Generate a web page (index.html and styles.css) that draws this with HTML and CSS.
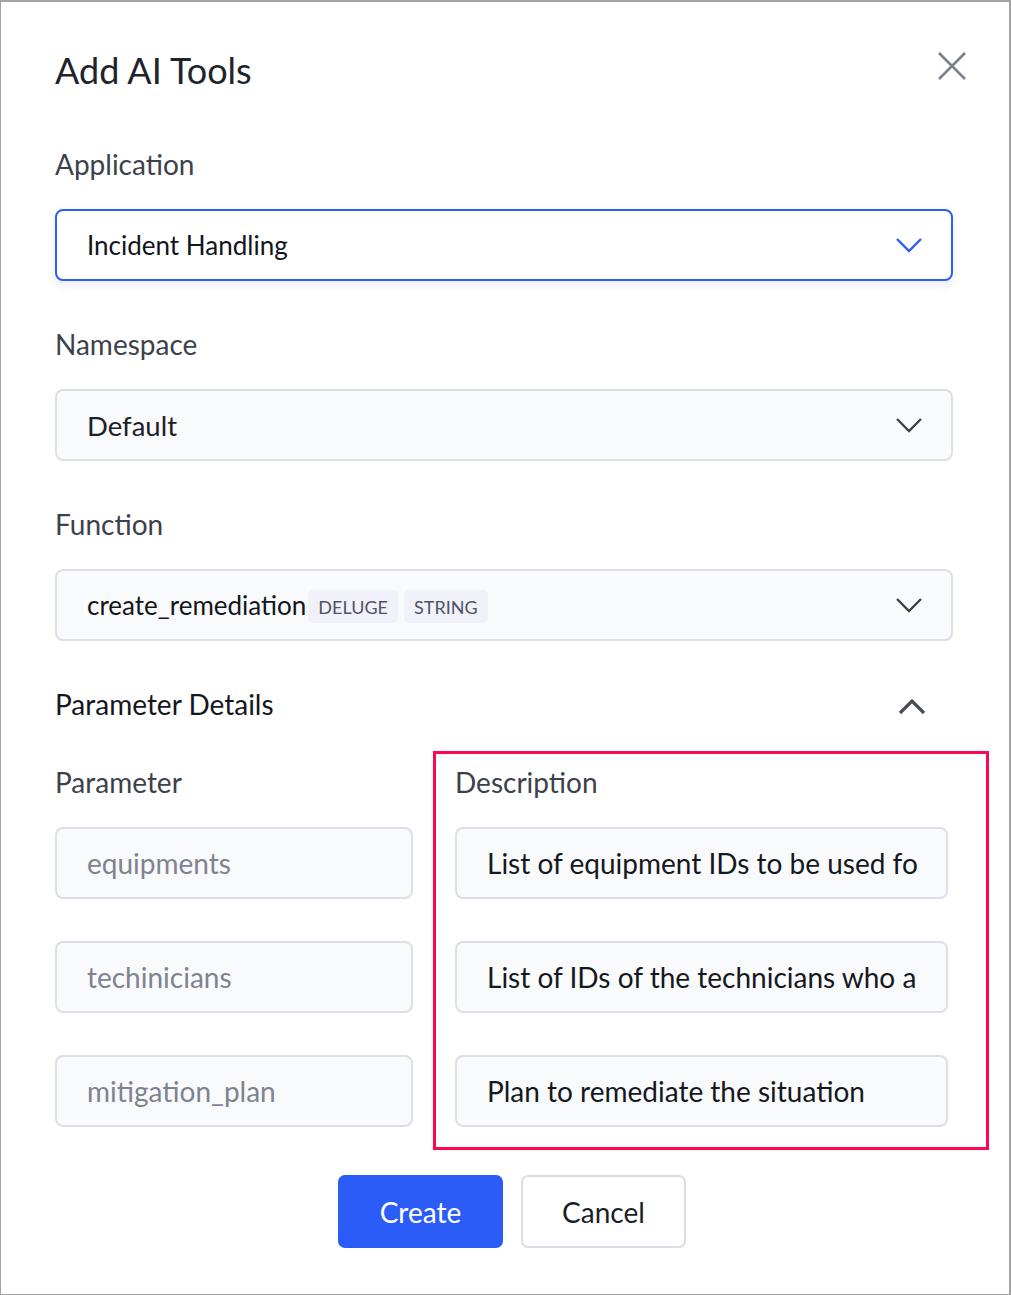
FILE: index.html
```html
<!DOCTYPE html>
<html>
<head>
<meta charset="utf-8">
<link rel="stylesheet" href="styles.css">
</head>
<body>
<div class="modal">
  <div class="header">
    <h1 class="title">Add AI Tools</h1>
    <button class="close" aria-label="Close">
      <svg width="30" height="30" viewBox="0 0 30 30"><path d="M2 2 L28 28 M28 2 L2 28" stroke="#7b808c" stroke-width="2.6" fill="none"/></svg>
    </button>
  </div>

  <div class="field">
    <div class="label">Application</div>
    <div class="select active">
      <span class="value sm">Incident Handling</span>
      <svg class="chev" width="28" height="16" viewBox="0 0 28 16"><path d="M2 2 L14 14 L26 2" stroke="#2b5cf5" stroke-width="2.4" fill="none"/></svg>
    </div>
  </div>

  <div class="field">
    <div class="label">Namespace</div>
    <div class="select">
      <span class="value">Default</span>
      <svg class="chev" width="28" height="16" viewBox="0 0 28 16"><path d="M2 2 L14 14 L26 2" stroke="#3e424c" stroke-width="2.4" fill="none"/></svg>
    </div>
  </div>

  <div class="field">
    <div class="label">Function</div>
    <div class="select">
      <span class="value sm">create_remediation</span><span class="tag first">DELUGE</span><span class="tag">STRING</span>
      <svg class="chev" width="28" height="16" viewBox="0 0 28 16"><path d="M2 2 L14 14 L26 2" stroke="#3e424c" stroke-width="2.4" fill="none"/></svg>
    </div>
  </div>

  <div class="section-head">
    <span class="section-title">Parameter Details</span>
    <svg class="chev-up" width="30" height="18" viewBox="0 0 30 18"><path d="M3 15 L15 3 L27 15" stroke="#4a4e58" stroke-width="3.2" fill="none"/></svg>
  </div>

  <div class="params">
    <div class="col col-param">
      <div class="label">Parameter</div>
      <div class="input muted">equipments</div>
      <div class="input muted">techinicians</div>
      <div class="input muted">mitigation_plan</div>
    </div>
    <div class="col col-desc">
      <div class="label">Description</div>
      <div class="input">List of equipment IDs to be used fo</div>
      <div class="input">List of IDs of the technicians who a</div>
      <div class="input">Plan to remediate the situation</div>
    </div>
    <div class="highlight"></div>
  </div>

  <div class="actions">
    <button class="btn primary">Create</button>
    <button class="btn secondary">Cancel</button>
  </div>
</div>
</body>
</html>
```
FILE: styles.css
```css
html, body {
  margin: 0;
  padding: 0;
  background: #fff;
}
body {
  font-family: Lato, "Noto Sans", sans-serif;
  color: #1b1e26;
}
.modal {
  box-sizing: border-box;
  width: 1011px;
  height: 1295px;
  border: 1px solid #a3a3a3;
  border-top-width: 2px;
  border-right-width: 2px;
  padding: 0 56px 0 54px;
  overflow: hidden;
}
.header {
  display: flex;
  justify-content: space-between;
  align-items: flex-start;
  height: 144px;
}
.title {
  margin: 45px 0 0 0;
  font-size: 36px;
  line-height: 46px;
  font-weight: 400;
  color: #1f232c;
}
.close {
  margin: 49px -14px 0 0;
  padding: 0;
  border: 0;
  background: none;
  width: 30px;
  height: 30px;
  display: flex;
}
.field {
  margin-bottom: 45px;
}
.label {
  font-size: 28px;
  line-height: 36px;
  color: #3d414b;
  margin-bottom: 27px;
}
.select {
  box-sizing: border-box;
  height: 72px;
  border: 2px solid #dedfe6;
  border-radius: 8px;
  background: #f9fafc;
  display: flex;
  align-items: center;
  padding: 0 30px 0 30px;
}
.select.active {
  border-color: #2e5ef2;
  background: #fff;
  box-shadow: 0 4px 10px rgba(60, 80, 140, 0.12);
}
.value {
  font-size: 27.5px;
  color: #1d2028;
  white-space: nowrap;
}
.value.sm {
  font-size: 26px;
  color: #12151b;
}
.tag {
  font-size: 18px;
  color: #4f5464;
  background: #f0f1f9;
  border-radius: 5px;
  padding: 5px 10px 4px 10px;
  margin-left: 6px;
  line-height: 24px;
  margin-top: 3px;
}
.tag.first {
  margin-left: 2px;
}
.chev {
  margin-left: auto;
  margin-right: -2px;
}
.section-head {
  display: flex;
  align-items: center;
  justify-content: space-between;
  height: 36px;
  margin-bottom: 42px;
}
.section-title {
  font-size: 28px;
  color: #14171d;
}
.chev-up {
  margin-right: 26px;
  margin-top: 6px;
}
.params {
  position: relative;
  display: grid;
  grid-template-columns: 358px 493px;
  column-gap: 42px;
}
.col {
  display: flex;
  flex-direction: column;
  gap: 42px;
}
.col .label {
  margin-bottom: -15px;
}
.input {
  box-sizing: border-box;
  height: 72px;
  border: 2px solid #dedfe6;
  border-radius: 8px;
  background: #f9fafc;
  display: flex;
  align-items: center;
  padding: 0 30px;
  font-size: 28px;
  color: #15181f;
  white-space: nowrap;
  overflow: hidden;
}
.input.muted {
  color: #7e8391;
}
.highlight {
  position: absolute;
  left: 378px;
  top: -13px;
  width: 556px;
  height: 399px;
  box-sizing: border-box;
  border: 3px solid #ff0650;
  pointer-events: none;
}
.actions {
  display: flex;
  justify-content: center;
  gap: 18px;
  margin-top: 48px;
  padding-left: 16px;
}
.btn {
  box-sizing: border-box;
  height: 73px;
  width: 165px;
  border-radius: 7px;
  font-family: Lato, "Noto Sans", sans-serif;
  font-size: 28px;
  cursor: pointer;
}
.btn.primary {
  background: #2c5cf8;
  border: 0;
  color: #fff;
}
.btn.secondary {
  background: #fff;
  border: 2px solid #dcdee5;
  color: #1b1e26;
}
```
